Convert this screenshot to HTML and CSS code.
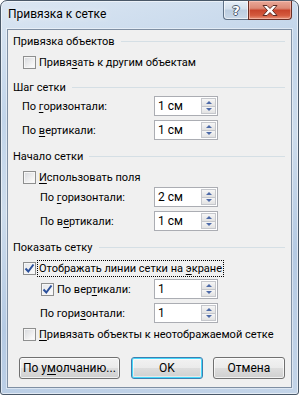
FILE: index.html
```html
<!DOCTYPE html>
<html lang="ru">
<head>
  <meta charset="UTF-8" />
  <title>Привязка к сетке</title>
  <link rel="stylesheet" href="styles.css">
</head>
<body>
  <div class="window">
    <div class="titlebar">
      <span class="title">Привязка к сетке</span>
      <div class="caption">
        <div class="cap help"><span>?</span></div>
        <div class="cap close">
          <svg width="18" height="11" viewBox="0 0 18 11">
            <path d="M2 0.5 H6 L9 3.5 L12 0.5 H16 L11.5 5.5 L16 10.5 H12 L9 7.5 L6 10.5 H2 L6.5 5.5 Z" fill="#fff" stroke="#5b2a22" stroke-width="1" stroke-linejoin="round"/>
          </svg>
        </div>
      </div>
    </div>

    <div class="client">
      <div class="group-head first"><span>Привязка объектов</span></div>
      <div class="check-row r1">
        <span class="checkbox"></span>
        <span>Привя<u>з</u>ать к другим объектам</span>
      </div>

      <div class="group-head"><span>Шаг сетки</span></div>
      <div class="field first-field">
        <span class="label">По <u>г</u>оризонтали:</span>
        <div class="spin"><span class="value">1 см</span><div class="arrows"><i class="up"></i><i class="down"></i></div></div>
      </div>
      <div class="field">
        <span class="label">По <u>в</u>ертикали:</span>
        <div class="spin"><span class="value">1 см</span><div class="arrows"><i class="up"></i><i class="down"></i></div></div>
      </div>

      <div class="group-head"><span>Начало сетки</span></div>
      <div class="check-row">
        <span class="checkbox"></span>
        <span><u>И</u>спользовать поля</span>
      </div>
      <div class="field first-field">
        <span class="label indent">По <u>г</u>оризонтали:</span>
        <div class="spin"><span class="value">2 см</span><div class="arrows"><i class="up"></i><i class="down"></i></div></div>
      </div>
      <div class="field">
        <span class="label indent">По в<u>е</u>ртикали:</span>
        <div class="spin"><span class="value">1 см</span><div class="arrows"><i class="up"></i><i class="down"></i></div></div>
      </div>

      <div class="group-head"><span>Показать сетку</span></div>
      <div class="check-row">
        <span class="checkbox checked">
          <svg width="11" height="11" viewBox="0 0 11 11"><path d="M1.5 5.5 L4.3 8.5 L9.5 1.5" fill="none" stroke="#2a4f9b" stroke-width="2"/></svg>
        </span>
        <span class="focus">Отображать линии сетки на <u>э</u>кране</span>
      </div>
      <div class="field sub-field">
        <div class="label sub-check">
          <span class="checkbox checked">
            <svg width="11" height="11" viewBox="0 0 11 11"><path d="M1.5 5.5 L4.3 8.5 L9.5 1.5" fill="none" stroke="#2a4f9b" stroke-width="2"/></svg>
          </span>
          <span>По вер<u>т</u>икали:</span>
        </div>
        <div class="spin"><span class="value">1</span><div class="arrows"><i class="up"></i><i class="down"></i></div></div>
      </div>
      <div class="field">
        <span class="label indent">По гори<u>з</u>онтали:</span>
        <div class="spin"><span class="value">1</span><div class="arrows"><i class="up"></i><i class="down"></i></div></div>
      </div>
      <div class="check-row last">
        <span class="checkbox"></span>
        <span><u>П</u>ривязать объекты к неотображаемой сетке</span>
      </div>

      <div class="buttons">
        <button class="btn wide">По у<u>м</u>олчанию...</button>
        <button class="btn default">OK</button>
        <button class="btn">Отмена</button>
      </div>
    </div>
  </div>
</body>
</html>
```

FILE: styles.css
```css
body {
  margin: 0;
  background: #fff;
  font-family: Roboto, "Noto Sans", sans-serif;
  font-size: 11px;
  color: #000;
}

u {
  text-decoration-thickness: 1px;
  text-underline-offset: 2px;
}

.window {
  width: 299px;
  height: 395px;
  box-sizing: border-box;
  border: 1px solid #4a5868;
  border-radius: 7px 7px 3px 3px;
  padding: 0 6px 6px 6px;
  display: flex;
  flex-direction: column;
  background: linear-gradient(165deg, #dbe6f2 0%, #c2d5ea 25%, #cddcec 45%, #b5cae3 70%, #c4d5e9 100%);
  box-shadow: inset 0 0 0 1px rgba(255, 255, 255, 0.55);
}

.titlebar {
  height: 28px;
  display: flex;
  align-items: flex-start;
  justify-content: space-between;
}

.title {
  margin-top: 6px;
  margin-left: 1px;
  font-size: 12px;
  color: #000;
  text-shadow: 0 0 6px rgba(255, 255, 255, 0.9);
}

.caption {
  display: flex;
}

.cap {
  height: 18px;
  border: 1px solid #5f7186;
  border-top: none;
  display: flex;
  align-items: center;
  justify-content: center;
}

.help {
  width: 24px;
  border-right: none;
  border-radius: 0 0 0 4px;
  background: linear-gradient(#e6eef7 0%, #d3dfec 45%, #bccde0 50%, #c9d8e8 100%);
  box-shadow: inset 0 0 0 1px rgba(255, 255, 255, 0.6);
}

.help span {
  font-family: "DejaVu Sans", sans-serif;
  font-weight: bold;
  font-size: 13px;
  color: #fff;
  text-shadow: 1px 0 0 #4b5b6e, -1px 0 0 #4b5b6e, 0 1px 0 #4b5b6e, 0 -1px 0 #4b5b6e;
}

.close {
  width: 42px;
  border-color: #6b2e24;
  border-radius: 0 0 4px 0;
  background: linear-gradient(#e9a898 0%, #dc8a77 40%, #c8452c 52%, #d45a3e 80%, #e8947a 100%);
  box-shadow: inset 0 0 0 1px rgba(255, 210, 200, 0.5);
}

.client {
  flex: 1;
  border: 1px solid #7f8fa3;
  background: #f0f0f0;
  padding: 3px 6px 0 5px;
  box-shadow: 0 0 0 1px rgba(255, 255, 255, 0.45);
}

.group-head {
  display: flex;
  align-items: center;
  height: 16px;
  margin-top: 8px;
}

.group-head.first {
  margin-top: 0;
}

.group-head::after {
  content: "";
  flex: 1;
  height: 1px;
  background: #d5dfe5;
  margin-left: 6px;
}

.check-row {
  display: flex;
  align-items: center;
  height: 18px;
  margin-top: 4px;
  padding-left: 10px;
  gap: 3px;
  white-space: nowrap;
}

.check-row.r1 {
  margin-top: 4px;
  margin-bottom: 6px;
}

.check-row.last {
  margin-top: 2px;
}

.checkbox {
  width: 11px;
  height: 11px;
  border: 1px solid #8e8f8f;
  background: linear-gradient(135deg, #d6d8dc 0%, #f4f4f4 70%, #fff 100%);
  box-shadow: inset 0 0 0 1px #f6f6f6;
  display: flex;
  align-items: center;
  justify-content: center;
  flex: none;
}

.checkbox.checked {
  background: linear-gradient(135deg, #e4e6ea 0%, #fbfbfb 100%);
}

.focus {
  outline: 1px dotted #000;
  padding: 1px 1px;
  margin-left: -1px;
}

.field {
  display: flex;
  align-items: center;
  justify-content: space-between;
  height: 20px;
  margin-top: 4px;
  padding-left: 9px;
  padding-right: 67px;
  white-space: nowrap;
}

.field.first-field {
  margin-top: 1px;
}

.field.sub-field {
  margin-top: 2px;
}

.label.indent {
  padding-left: 18px;
}

.label.sub-check {
  display: flex;
  align-items: center;
  gap: 3px;
  padding-left: 19px;
}

.spin {
  width: 62px;
  height: 18px;
  border: 1px solid #abadb3;
  background: #fff;
  display: flex;
  align-items: center;
  justify-content: space-between;
  font-size: 12px;
}

.value {
  padding-left: 3px;
}

.arrows {
  width: 15px;
  height: 16px;
  margin-right: 1px;
  display: flex;
  flex-direction: column;
}

.arrows i {
  flex: 1;
  display: flex;
  align-items: center;
  justify-content: center;
  border: 1px solid #c5c7cc;
  background: linear-gradient(#f6f6f6, #e2e2e2);
}

.arrows i.down {
  border-top: none;
}

.arrows i::before {
  content: "";
  border-left: 3px solid transparent;
  border-right: 3px solid transparent;
}

.arrows i.up::before {
  border-bottom: 3px solid #4d6aa8;
}

.arrows i.down::before {
  border-top: 3px solid #4d6aa8;
}

.buttons {
  display: flex;
  margin-top: 14px;
  padding-left: 6px;
  gap: 10px;
}

.btn {
  font-family: Roboto, "Noto Sans", sans-serif;
  font-size: 12px;
  height: 22px;
  width: 73px;
  padding: 0;
  color: #000;
  border: 1px solid #707070;
  border-radius: 3px;
  background: linear-gradient(#f2f2f2 0%, #ebebeb 48%, #dddddd 52%, #cfcfcf 100%);
  box-shadow: inset 0 0 0 1px rgba(255, 255, 255, 0.7);
}

.btn.wide {
  width: 102px;
  margin-right: 1px;
}

.btn.default {
  border-color: #3c7fb1;
  box-shadow: inset 0 0 0 1px #48d8fb, inset 0 0 0 2px rgba(255, 255, 255, 0.5);
}
```
